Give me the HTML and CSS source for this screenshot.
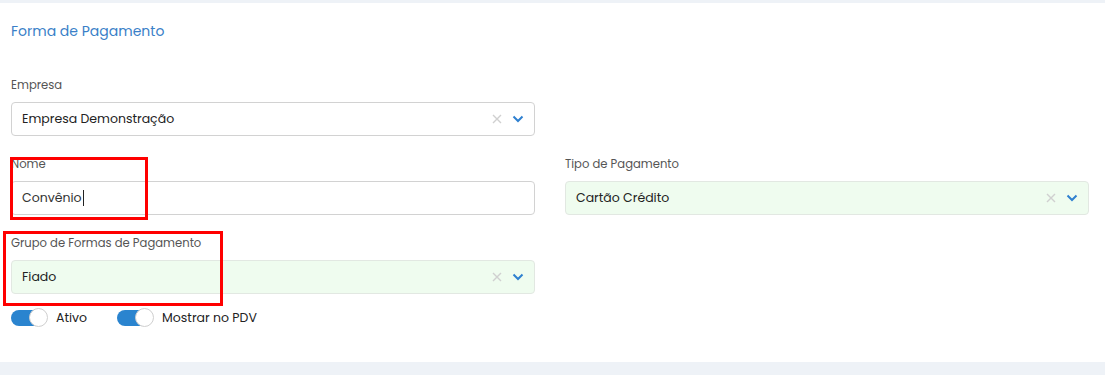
FILE: index.html
```html
<!DOCTYPE html>
<html lang="pt-BR">
<head>
<meta charset="utf-8">
<link rel="stylesheet" href="styles.css">
</head>
<body>
<div class="page">
  <div class="card">
    <h2 class="title">Forma de Pagamento</h2>
    <div class="grid">
      <div class="field">
        <label class="label">Empresa</label>
        <div class="select">
          <span class="value">Empresa Demonstração</span>
          <span class="icons">
            <svg class="clear" width="10" height="10" viewBox="0 0 10 10"><path d="M1 1L9 9M9 1L1 9" stroke="#d0d0d0" stroke-width="1.4"/></svg>
            <svg class="chev" width="12" height="8" viewBox="0 0 12 8"><path d="M1.5 1.5L6 6L10.5 1.5" stroke="#2f80d0" stroke-width="2" fill="none"/></svg>
          </span>
        </div>
      </div>
      <div></div>
      <div class="field">
        <label class="label">Nome</label>
        <div class="input"><span class="value">Convênio</span><span class="caret"></span></div>
      </div>
      <div class="field">
        <label class="label">Tipo de Pagamento</label>
        <div class="select green">
          <span class="value">Cartão Crédito</span>
          <span class="icons">
            <svg class="clear" width="10" height="10" viewBox="0 0 10 10"><path d="M1 1L9 9M9 1L1 9" stroke="#d0d0d0" stroke-width="1.4"/></svg>
            <svg class="chev" width="12" height="8" viewBox="0 0 12 8"><path d="M1.5 1.5L6 6L10.5 1.5" stroke="#2f80d0" stroke-width="2" fill="none"/></svg>
          </span>
        </div>
      </div>
      <div class="field">
        <label class="label">Grupo de Formas de Pagamento</label>
        <div class="select green">
          <span class="value">Fiado</span>
          <span class="icons">
            <svg class="clear" width="10" height="10" viewBox="0 0 10 10"><path d="M1 1L9 9M9 1L1 9" stroke="#d0d0d0" stroke-width="1.4"/></svg>
            <svg class="chev" width="12" height="8" viewBox="0 0 12 8"><path d="M1.5 1.5L6 6L10.5 1.5" stroke="#2f80d0" stroke-width="2" fill="none"/></svg>
          </span>
        </div>
      </div>
    </div>
    <div class="toggles">
      <div class="toggle"><span class="switch"><span class="knob"></span></span><span class="tlabel">Ativo</span></div>
      <div class="toggle"><span class="switch"><span class="knob"></span></span><span class="tlabel">Mostrar no PDV</span></div>
    </div>
    <div class="mark mark1"></div>
    <div class="mark mark2"></div>
  </div>
</div>
</body>
</html>
```

FILE: styles.css
```css
* { box-sizing: border-box; }
html, body { margin: 0; padding: 0; }
body {
  background: #eef2f7;
  font-family: "Poppins", "Lato", "Open Sans", sans-serif;
  color: #222;
  width: 1105px;
  height: 375px;
  overflow: hidden;
}
.page { padding-top: 3px; }
.card {
  position: relative;
  background: #fff;
  height: 359px;
  padding: 20px 16px 0 11px;
}
.title {
  margin: 0;
  font-size: 14px;
  font-weight: 400;
  color: #3a7fc8;
  line-height: 16px;
}
.grid {
  display: grid;
  grid-template-columns: 524px 524px;
  column-gap: 30px;
  row-gap: 21px;
  margin-top: 39px;
}
.field { display: flex; flex-direction: column; }
.label {
  font-size: 11.6px;
  color: #555;
  line-height: 14px;
  height: 14px;
  margin-bottom: 10px;
}
.select, .input {
  height: 34px;
  border: 1px solid #d2d2d2;
  border-radius: 4px;
  display: flex;
  align-items: center;
  padding: 0 10px;
  font-size: 12.5px;
  color: #222;
}
.select.green { background: #effcef; border-color: #e2e8e2; }
.value { flex: 1; white-space: nowrap; }
.input .value { flex: 0 0 auto; color: #333; }
.caret { display: inline-block; width: 1px; height: 16px; background: #222; margin-left: 1px; }
.icons { display: flex; align-items: center; gap: 10px; }
.toggles {
  display: flex;
  gap: 30px;
  margin-top: 14px;
}
.toggle { display: flex; align-items: center; gap: 8px; }
.switch {
  position: relative;
  width: 37px;
  height: 19px;
  display: block;
}
.switch::before {
  content: "";
  position: absolute;
  left: 0; top: 2px;
  width: 30px; height: 16px;
  border-radius: 8px;
  background: #2a84cf;
}
.knob {
  position: absolute;
  right: 0; top: 0;
  width: 19px; height: 19px;
  border-radius: 50%;
  background: #fff;
  border: 1px solid #cfcfcf;
}
.tlabel { font-size: 12.5px; color: #222; }
.mark {
  position: absolute;
  border: 3px solid #f00;
}
.mark1 { left: 10px; top: 154px; width: 138px; height: 63px; }
.mark2 { left: 3px; top: 228px; width: 220px; height: 75px; }
```
